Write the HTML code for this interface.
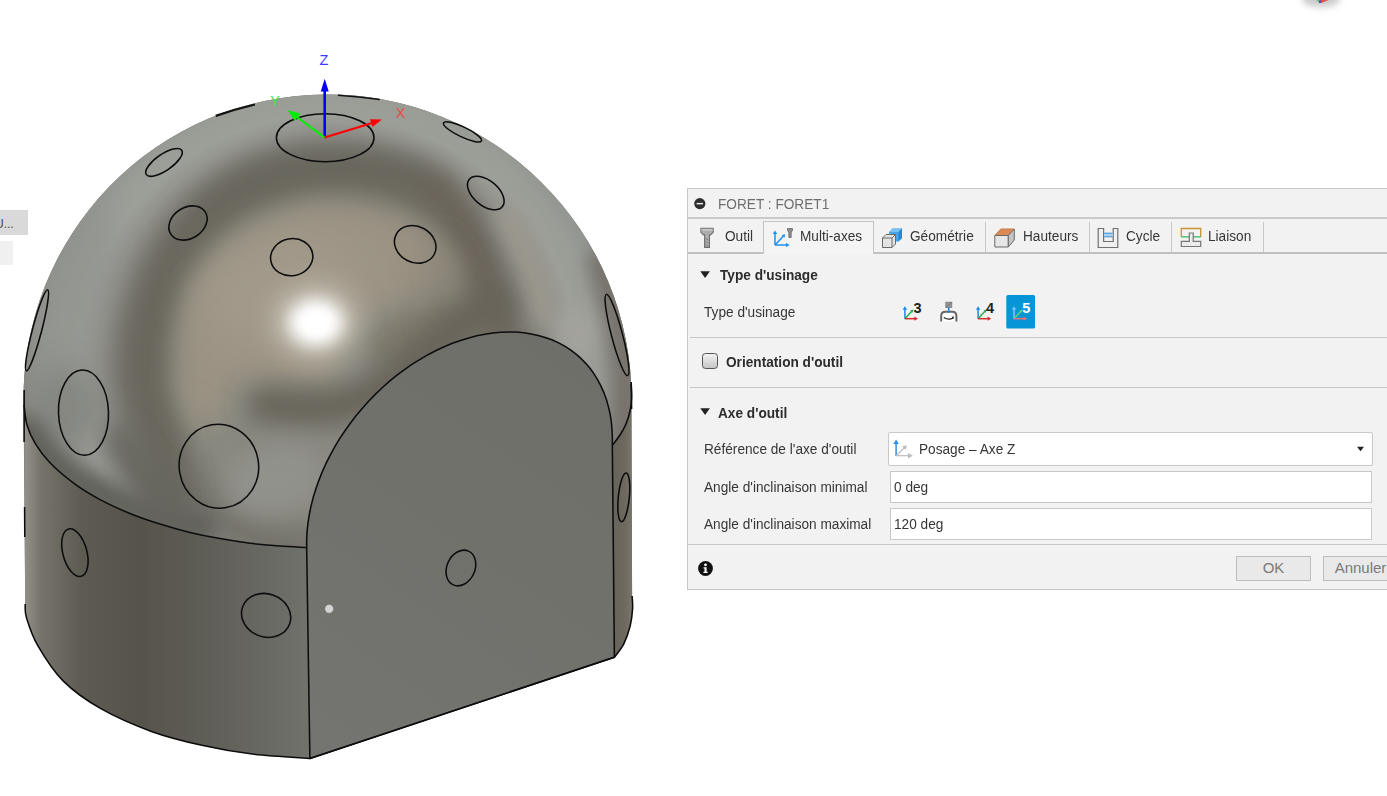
<!DOCTYPE html>
<html lang="fr"><head><meta charset="utf-8"><title>FORET : FORET1</title>
<style>
html,body{margin:0;padding:0;background:#fff;}
body{width:1387px;height:796px;overflow:hidden;position:relative;font-family:"Liberation Sans",sans-serif;font-size:13.65px;color:#363636;}
.abs{position:absolute;}
#dlg{position:absolute;left:687px;top:188px;width:720px;height:400px;background:#f2f2f2;border:1px solid #c6c6c6;}
#dlg *{box-sizing:border-box;}
.t{position:absolute;white-space:nowrap;line-height:16px;font-size:14px;transform:scaleX(0.975);transform-origin:0 50%;}
.b{font-weight:bold;color:#2c2c2c;}
.hl{position:absolute;background:#c8c8c8;height:1px;}
.vl{position:absolute;background:#c8c8c8;width:1px;}
.inp{position:absolute;background:#fff;border:1px solid #c8c8c8;}
.btn{position:absolute;background:#e9e9e9;border:1px solid #bdbdbd;color:#7a7a7a;font-size:15px;text-align:center;line-height:22px;}

</style></head>
<body>
<svg id="view" width="700" height="796" viewBox="0 0 700 796" style="position:absolute;left:0;top:0">
<defs>
<radialGradient id="gs" gradientUnits="userSpaceOnUse" cx="327.5" cy="365" r="320">
<stop offset="0" stop-color="#8a8a84"/>
<stop offset="0.45" stop-color="#88887f"/>
<stop offset="0.52" stop-color="#7d7c74"/>
<stop offset="0.58" stop-color="#75736b"/>
<stop offset="0.63" stop-color="#7c7b74"/>
<stop offset="0.68" stop-color="#878780"/>
<stop offset="0.73" stop-color="#94958f"/>
<stop offset="0.78" stop-color="#9d9f99"/>
<stop offset="0.84" stop-color="#9a9c96"/>
<stop offset="0.90" stop-color="#929490"/>
<stop offset="0.95" stop-color="#8b8b85"/>
<stop offset="1" stop-color="#86867f"/>
</radialGradient>
<radialGradient id="gh" gradientUnits="userSpaceOnUse" cx="318" cy="323" r="56">
<stop offset="0" stop-color="#fff" stop-opacity="1"/>
<stop offset="0.30" stop-color="#fff" stop-opacity="0.97"/>
<stop offset="0.55" stop-color="#f4f2ec" stop-opacity="0.6"/>
<stop offset="0.8" stop-color="#e0dcd0" stop-opacity="0.18"/>
<stop offset="1" stop-color="#d8d4c8" stop-opacity="0"/>
</radialGradient>
<linearGradient id="gc" gradientUnits="userSpaceOnUse" x1="24" y1="0" x2="310" y2="0">
<stop offset="0" stop-color="#94928a"/>
<stop offset="0.06" stop-color="#76736a"/>
<stop offset="0.2" stop-color="#5e5b53"/>
<stop offset="0.4" stop-color="#56534b"/>
<stop offset="0.65" stop-color="#5f5e57"/>
<stop offset="0.85" stop-color="#696963"/>
<stop offset="1" stop-color="#72726c"/>
</linearGradient>
<linearGradient id="gr" gradientUnits="userSpaceOnUse" x1="612" y1="0" x2="633" y2="0">
<stop offset="0" stop-color="#67635a"/>
<stop offset="0.6" stop-color="#6d695f"/>
<stop offset="1" stop-color="#7b776c"/>
</linearGradient>
<linearGradient id="gf" gradientUnits="userSpaceOnUse" x1="600" y1="340" x2="320" y2="750">
<stop offset="0" stop-color="#6f6f69"/>
<stop offset="1" stop-color="#747470"/>
</linearGradient>
<clipPath id="ch"><path d="M23.57 404.90 A304.0 304.0 0 1 1 631.50 398.60 C631.3 386.3 631.8 393.5 631.6 398.0 C631.4 402.5 630.9 406.7 630.0 411.0 C629.1 415.3 627.7 420.0 626.0 424.0 C624.3 428.0 622.3 431.5 620.0 435.0 C617.7 438.5 613.7 443.5 612.4 445.2 L612.4 437.2 L612.0 429.2 L611.3 421.5 L610.1 413.9 L608.4 406.6 L606.4 399.5 L603.9 392.6 L601.0 386.1 L597.7 379.9 L594.0 373.9 L590.0 368.3 L585.5 363.1 L580.7 358.2 L575.5 353.7 L570.1 349.6 L564.3 345.9 L558.2 342.6 L551.8 339.8 L545.1 337.4 L538.2 335.4 L531.1 333.9 L523.8 332.8 L516.3 332.1 L508.6 332.0 L500.8 332.2 L492.9 333.0 L484.9 334.2 L476.8 335.8 L468.7 337.9 L460.5 340.4 L452.3 343.3 L444.2 346.7 L436.1 350.5 L428.0 354.7 L420.1 359.3 L412.2 364.2 L404.5 369.6 L397.0 375.2 L389.6 381.2 L382.5 387.5 L375.5 394.1 L368.8 401.0 L362.4 408.2 L356.2 415.6 L350.3 423.2 L344.8 431.0 L339.5 438.9 L334.6 447.1 L330.1 455.3 L325.9 463.7 L322.1 472.1 L318.8 480.6 L315.8 489.1 L313.2 497.6 L311.0 506.1 L309.3 514.6 L308.0 523.0 L307.1 531.3 L306.7 539.5 L306.7 547.5 C302.5 547.3 289.5 546.9 280.0 546.1 C270.5 545.4 260.0 544.4 250.0 543.2 C240.0 541.9 230.0 540.4 220.0 538.6 C210.0 536.8 200.0 534.8 190.0 532.4 C180.0 530.0 170.0 527.3 160.0 524.1 C150.0 521.0 140.0 517.6 130.0 513.5 C120.0 509.4 109.2 504.4 100.0 499.6 C90.8 494.7 83.3 490.4 75.0 484.2 C66.7 478.1 56.7 469.7 50.0 462.8 C43.3 455.9 38.8 449.4 35.0 443.1 C31.2 436.7 28.8 431.3 27.0 425.0 C25.2 418.6 24.5 408.2 24.0 404.9 Z"/></clipPath>
<filter id="b20" filterUnits="userSpaceOnUse" x="-100" y="-100" width="900" height="1000"><feGaussianBlur stdDeviation="22"/></filter>
<filter id="b10" filterUnits="userSpaceOnUse" x="-100" y="-100" width="900" height="1000"><feGaussianBlur stdDeviation="9"/></filter>
<filter id="b14" filterUnits="userSpaceOnUse" x="-100" y="-100" width="900" height="1000"><feGaussianBlur stdDeviation="14"/></filter>
<filter id="b8" filterUnits="userSpaceOnUse" x="-100" y="-100" width="900" height="1000"><feGaussianBlur stdDeviation="8"/></filter>
<filter id="b5" filterUnits="userSpaceOnUse" x="-100" y="-100" width="900" height="1000"><feGaussianBlur stdDeviation="4"/></filter>
<filter id="b12" filterUnits="userSpaceOnUse" x="-100" y="-100" width="900" height="1000"><feGaussianBlur stdDeviation="12"/></filter>
<filter id="b16" filterUnits="userSpaceOnUse" x="-100" y="-100" width="900" height="1000"><feGaussianBlur stdDeviation="16"/></filter>
</defs>
<!-- left UI fragments -->
<rect x="0" y="210" width="28" height="25" fill="#d9d9d9"/>
<rect x="0" y="241" width="13" height="24" fill="#f0f0f0"/>
<text x="-5" y="228" font-family="Liberation Sans, sans-serif" font-size="12" fill="#444">U...</text>
<!-- body -->
<path d="M23.57 404.90 A304.0 304.0 0 1 1 631.50 398.60 L632.1 596.0 C632.2 598.1 632.9 603.6 632.6 608.6 C632.3 613.6 631.6 620.4 630.1 626.3 C628.6 632.2 626.4 638.7 623.8 643.9 C621.2 649.1 616.0 655.1 614.4 657.3 L309.9 758.4 C300.3 757.7 270.3 756.3 252.3 754.1 C234.3 751.9 218.7 749.1 201.9 745.3 C185.1 741.5 168.2 737.5 151.4 731.4 C134.6 725.3 115.6 717.1 100.9 708.7 C86.2 700.3 73.6 691.4 63.1 680.9 C52.6 670.4 43.9 656.1 37.8 645.6 C31.7 635.1 28.6 624.6 26.5 617.8 C24.4 611.0 25.4 607.1 25.2 605.0 Z" fill="#6e6b62"/>
<path d="M24.00 404.90 C24.5 408.2 25.2 418.6 27.0 425.0 C28.8 431.3 31.2 436.7 35.0 443.1 C38.8 449.4 43.3 455.9 50.0 462.8 C56.7 469.7 66.7 478.1 75.0 484.2 C83.3 490.4 90.8 494.7 100.0 499.6 C109.2 504.4 120.0 509.4 130.0 513.5 C140.0 517.6 150.0 521.0 160.0 524.1 C170.0 527.3 180.0 530.0 190.0 532.4 C200.0 534.8 210.0 536.8 220.0 538.6 C230.0 540.4 240.0 541.9 250.0 543.2 C260.0 544.4 270.5 545.4 280.0 546.1 C289.5 546.9 302.5 547.3 307.0 547.6 L309.9 758.4 C300.3 757.7 270.3 756.3 252.3 754.1 C234.3 751.9 218.7 749.1 201.9 745.3 C185.1 741.5 168.2 737.5 151.4 731.4 C134.6 725.3 115.6 717.1 100.9 708.7 C86.2 700.3 73.6 691.4 63.1 680.9 C52.6 670.4 43.9 656.1 37.8 645.6 C31.7 635.1 28.6 624.6 26.5 617.8 C24.4 611.0 25.4 607.1 25.2 605.0 Z" fill="url(#gc)"/>
<path d="M612.40 445.20 C613.7 443.5 617.7 438.5 620.0 435.0 C622.3 431.5 624.3 428.0 626.0 424.0 C627.7 420.0 629.1 415.3 630.0 411.0 C630.9 406.7 631.4 402.5 631.6 398.0 C631.8 393.5 631.3 386.3 631.2 384.0 L632.1 596.0 C632.2 598.1 632.9 603.6 632.6 608.6 C632.3 613.6 631.6 620.4 630.1 626.3 C628.6 632.2 626.4 638.7 623.8 643.9 C621.2 649.1 616.0 655.1 614.4 657.3 Z" fill="url(#gr)"/>
<g clip-path="url(#ch)">
<rect x="0" y="80" width="660" height="500" fill="url(#gs)"/>
<!-- overlays -->
<ellipse cx="78" cy="300" rx="30" ry="100" fill="#8f918b" opacity="0.55" filter="url(#b14)" transform="rotate(12 78 300)"/>
<g fill="none" stroke="#69665d" stroke-linecap="round" stroke-linejoin="round" filter="url(#b12)">
<path d="M168 500 C165 470 160 440 152 410 C143 380 143 345 153 315 C160 290 168 270 181 251 C195 228 215 200 261 180 C285 172 305 168 323 168 C345 167 360 168 372 170 C400 175 420 182 436 192" stroke-width="46"/>
<path d="M436 192 C455 208 468 235 476 262 C482 280 488 300 492 332" stroke-width="38" stroke="#6a645a"/>
</g>
<ellipse cx="425" cy="335" rx="62" ry="30" fill="#7f796d" filter="url(#b12)" transform="rotate(-18 425 335)"/>
<path d="M318 203 C350 201 378 205 403 216 C428 227 442 242 450 258 C456 268 460 276 462 282 C450 290 440 292 430 294 C418 297 410 299 400 302 C388 305 380 308 370 312 C360 317 354 321 350 327 C346 335 346 342 345 350 C343 360 341 367 338 373 C333 380 327 384 320 386 C312 386 306 385 300 384 C285 381 272 378 260 378 C250 378 242 379 235 382 C231 387 230 392 228 398 C226 407 223 415 218 421 C214 426 210 428 205 428 C200 428 195 425 192 420 C186 412 183 404 180 395 C178 384 180 372 180 360 C180 346 180 335 182 322 C184 308 187 297 192 286 C198 274 206 266 215 258 C225 248 236 239 248 232 C258 225 270 219 282 214 C293 209 305 205 318 203 Z" fill="#9b9383" filter="url(#b14)"/>
<ellipse cx="285" cy="292" rx="80" ry="56" fill="#a29a8a" filter="url(#b20)" transform="rotate(-8 295 295)"/>
<ellipse cx="448" cy="300" rx="18" ry="60" fill="#7d786d" opacity="0.5" filter="url(#b16)" transform="rotate(-15 445 300)"/>
<path d="M508 218 C525 250 538 285 546 318" stroke-width="24" fill="none" stroke="#9b988e" stroke-linecap="round" filter="url(#b10)"/>
<ellipse cx="578" cy="332" rx="22" ry="26" fill="#a3a29c" filter="url(#b10)"/>
<path d="M600 262 C612 295 620 330 624 365 C626 390 626 410 622 440" stroke-width="24" fill="none" stroke="#737068" stroke-linecap="round" filter="url(#b10)"/>
<path d="M266 405 C300 408 340 411 366 398 C390 385 415 360 445 336 C460 324 475 314 492 306" stroke-width="36" fill="none" stroke="#67635a" stroke-linecap="round" filter="url(#b12)"/>
<ellipse cx="66" cy="408" rx="36" ry="42" fill="#82847e" opacity="0.85" filter="url(#b14)"/>
<path d="M28 432 C40 452 55 468 75 480 C95 492 115 502 135 509 C155 516 175 522 200 528" stroke-width="34" fill="none" stroke="#62625c" stroke-linecap="round" filter="url(#b10)"/>
<path d="M120 440 C135 470 150 490 175 505" stroke-width="30" fill="none" stroke="#66665f" stroke-linecap="round" filter="url(#b12)"/>
<ellipse cx="275" cy="480" rx="50" ry="34" fill="#92928c" filter="url(#b12)" transform="rotate(-15 275 480)"/>
<ellipse cx="316" cy="322.500" rx="42" ry="36" fill="#e6e2d8" opacity="0.55" filter="url(#b14)"/>
<ellipse cx="316" cy="322.500" rx="27" ry="23" fill="#fff" filter="url(#b8)"/>
<ellipse cx="316" cy="322.500" rx="14" ry="12" fill="#fff" filter="url(#b5)"/>
</g>
<path d="M306.67 547.53 L306.7 539.5 L307.1 531.3 L308.0 523.0 L309.3 514.6 L311.0 506.1 L313.2 497.6 L315.8 489.1 L318.8 480.6 L322.1 472.1 L325.9 463.7 L330.1 455.3 L334.6 447.1 L339.5 438.9 L344.8 431.0 L350.3 423.2 L356.2 415.6 L362.4 408.2 L368.8 401.0 L375.5 394.1 L382.5 387.5 L389.6 381.2 L397.0 375.2 L404.5 369.6 L412.2 364.2 L420.1 359.3 L428.0 354.7 L436.1 350.5 L444.2 346.7 L452.3 343.3 L460.5 340.4 L468.7 337.9 L476.8 335.8 L484.9 334.2 L492.9 333.0 L500.8 332.2 L508.6 332.0 L516.3 332.1 L523.8 332.8 L531.1 333.9 L538.2 335.4 L545.1 337.4 L551.8 339.8 L558.2 342.6 L564.3 345.9 L570.1 349.6 L575.5 353.7 L580.7 358.2 L585.5 363.1 L590.0 368.3 L594.0 373.9 L597.7 379.9 L601.0 386.1 L603.9 392.6 L606.4 399.5 L608.4 406.6 L610.1 413.9 L611.3 421.5 L612.0 429.2 L612.4 437.2 L612.3 445.2 L614.4 657.3 L309.9 758.4 Z" fill="url(#gf)"/>
<g fill="none" stroke="#0c0c0c" stroke-width="1.55" stroke-linejoin="round">
<path d="M24.20 390.00 L24.1 442.0 M24.6 507 L24.8 537 M25.20 604.00 C25.4 607.1 24.4 611.0 26.5 617.8 C28.6 624.6 31.7 635.1 37.8 645.6 C43.9 656.1 52.6 670.4 63.1 680.9 C73.6 691.4 86.2 700.3 100.9 708.7 C115.6 717.1 134.6 725.3 151.4 731.4 C168.2 737.5 185.1 741.5 201.9 745.3 C218.7 749.1 234.3 751.9 252.3 754.1 C270.3 756.3 300.3 757.7 309.9 758.4 L614.4 657.3 C616.0 655.1 621.2 649.1 623.8 643.9 C626.4 638.7 628.6 632.2 630.1 626.3 C631.6 620.4 632.3 613.6 632.6 608.6 C632.9 603.6 632.2 598.1 632.1 596.0 M631.6 409 L631.5 398.6 L631.2 382.0"/>
<path d="M24.00 404.90 C24.5 408.2 25.2 418.6 27.0 425.0 C28.8 431.3 31.2 436.7 35.0 443.1 C38.8 449.4 43.3 455.9 50.0 462.8 C56.7 469.7 66.7 478.1 75.0 484.2 C83.3 490.4 90.8 494.7 100.0 499.6 C109.2 504.4 120.0 509.4 130.0 513.5 C140.0 517.6 150.0 521.0 160.0 524.1 C170.0 527.3 180.0 530.0 190.0 532.4 C200.0 534.8 210.0 536.8 220.0 538.6 C230.0 540.4 240.0 541.9 250.0 543.2 C260.0 544.4 270.5 545.4 280.0 546.1 C289.5 546.9 302.5 547.3 307.0 547.6"/>
<path d="M306.67 547.53 L306.7 539.5 L307.1 531.3 L308.0 523.0 L309.3 514.6 L311.0 506.1 L313.2 497.6 L315.8 489.1 L318.8 480.6 L322.1 472.1 L325.9 463.7 L330.1 455.3 L334.6 447.1 L339.5 438.9 L344.8 431.0 L350.3 423.2 L356.2 415.6 L362.4 408.2 L368.8 401.0 L375.5 394.1 L382.5 387.5 L389.6 381.2 L397.0 375.2 L404.5 369.6 L412.2 364.2 L420.1 359.3 L428.0 354.7 L436.1 350.5 L444.2 346.7 L452.3 343.3 L460.5 340.4 L468.7 337.9 L476.8 335.8 L484.9 334.2 L492.9 333.0 L500.8 332.2 L508.6 332.0 L516.3 332.1 L523.8 332.8 L531.1 333.9 L538.2 335.4 L545.1 337.4 L551.8 339.8 L558.2 342.6 L564.3 345.9 L570.1 349.6 L575.5 353.7 L580.7 358.2 L585.5 363.1 L590.0 368.3 L594.0 373.9 L597.7 379.9 L601.0 386.1 L603.9 392.6 L606.4 399.5 L608.4 406.6 L610.1 413.9 L611.3 421.5 L612.0 429.2 L612.4 437.2 L612.3 445.2 L614.4 657.3 L309.9 758.4 Z"/>
<path d="M631.20 384.00 C631.3 386.3 631.8 393.5 631.6 398.0 C631.4 402.5 630.9 406.7 630.0 411.0 C629.1 415.3 627.7 420.0 626.0 424.0 C624.3 428.0 622.3 431.5 620.0 435.0 C617.7 438.5 613.7 443.5 612.4 445.2"/>
<ellipse cx="325.2" cy="137.7" rx="48.8" ry="24.0" transform="rotate(0.0 325.2 137.7)"/>
<ellipse cx="164.0" cy="162.4" rx="21.5" ry="8.2" transform="rotate(-34.6 164.0 162.4)"/>
<ellipse cx="188.0" cy="223.0" rx="20.5" ry="15.5" transform="rotate(-33.0 188.0 223.0)"/>
<ellipse cx="291.7" cy="257.2" rx="21.2" ry="18.5" transform="rotate(-10.0 291.7 257.2)"/>
<ellipse cx="415.2" cy="244.4" rx="21.5" ry="18.0" transform="rotate(28.0 415.2 244.4)"/>
<ellipse cx="485.8" cy="193.0" rx="21.5" ry="12.5" transform="rotate(40.0 485.8 193.0)"/>
<ellipse cx="462.5" cy="131.9" rx="21.0" ry="5.0" transform="rotate(25.3 462.5 131.9)"/>
<ellipse cx="37.0" cy="330.3" rx="42.0" ry="4.6" transform="rotate(104.7 37.0 330.3)"/>
<ellipse cx="617.0" cy="335.0" rx="42.0" ry="5.5" transform="rotate(75.3 617.0 335.0)"/>
<ellipse cx="83.5" cy="412.6" rx="42.6" ry="25.0" transform="rotate(88.0 83.5 412.6)"/>
<ellipse cx="218.9" cy="466.2" rx="42.0" ry="39.7" transform="rotate(80.0 218.9 466.2)"/>
<ellipse cx="74.9" cy="552.6" rx="24.5" ry="12.0" transform="rotate(75.0 74.9 552.6)"/>
<ellipse cx="266.1" cy="615.4" rx="25.0" ry="21.5" transform="rotate(20.0 266.1 615.4)"/>
<ellipse cx="623.8" cy="497.3" rx="24.5" ry="5.5" transform="rotate(95.6 623.8 497.3)"/>
<ellipse cx="460.9" cy="568.0" rx="18.5" ry="14.0" transform="rotate(-65.6 460.9 568.0)"/>
</g>
<g stroke="#111" fill="none" stroke-linecap="butt">
<path d="M215.7 115.9 Q235 109.2 254.9 104.5" stroke-width="2.2"/>
<path d="M337.9 95.2 Q359 96.4 379.8 99.6" stroke-width="1.5"/>
</g>
<circle cx="329.2" cy="608.8" r="4.4" fill="#d4d4d4" stroke="#66665f" stroke-opacity="0.6" stroke-width="0.8"/>
<!-- axes -->
<g stroke-linecap="butt">
<line x1="324.7" y1="137.6" x2="324.7" y2="90" stroke="#0000ff" stroke-width="2.6"/>
<polygon points="324.7,78.7 320.7,91.5 328.7,91.5" fill="#0000ff"/>
<line x1="324.7" y1="137.6" x2="297" y2="117" stroke="#00ee00" stroke-width="2.1"/>
<polygon points="287.8,110.3 300.5,113.5 294.8,121" fill="#00ee00"/>
<line x1="324.7" y1="137.6" x2="371.3" y2="123.2" stroke="#ff0000" stroke-width="2.1"/>
<polygon points="381.9,119.5 370,119.2 372.4,127" fill="#ff0000"/>
</g>
<g font-family="Liberation Sans, sans-serif" font-size="14.5" text-anchor="middle">
<text x="324" y="64.5" fill="#3a3aff">Z</text>
<text x="275" y="106" fill="#44e844">Y</text>
<text x="400.5" y="118.2" fill="#f04848">X</text>
</g>
</svg>
<div id="dlg">
<!-- coordinates inside are page coords minus (688,189) -->
<div id="in" style="position:absolute;left:-688px;top:-189px;width:0;height:0">
<!-- title -->
<svg class="abs" style="left:693px;top:197px" width="13" height="13" viewBox="0 0 13 13"><circle cx="6.800" cy="6.600" r="5.600" fill="#2e2e2e"/><rect x="3.600" y="5.900" width="6.400" height="1.500" fill="#e8e8e8"/></svg>
<div class="t" style="left:718.4px;top:195.500px;color:#6e6e6e">FORET : FORET1</div>
<div class="hl" style="left:688px;top:217px;width:700px;height:2px;background:#cacaca"></div>
<!-- tabs -->
<div class="hl" style="left:688px;top:252px;width:76px;height:2px;background:#c0c0c0"></div>
<div class="hl" style="left:874px;top:252px;width:520px;height:2px;background:#c0c0c0"></div>
<div class="abs" style="left:763px;top:221px;width:111px;height:33px;border:1px solid #c4c4c4;border-bottom:none;background:#f4f4f4"></div>
<div class="vl" style="left:985px;top:222px;height:30px"></div>
<div class="vl" style="left:1089px;top:222px;height:30px"></div>
<div class="vl" style="left:1171px;top:222px;height:30px"></div>
<div class="vl" style="left:1263px;top:222px;height:30px"></div>
<div class="t" style="left:725px;top:228.3px">Outil</div>
<div class="t" style="left:799.8px;top:228.3px">Multi-axes</div>
<div class="t" style="left:910px;top:228.3px">Géométrie</div>
<div class="t" style="left:1022.5px;top:228.3px">Hauteurs</div>
<div class="t" style="left:1125.8px;top:228.3px">Cycle</div>
<div class="t" style="left:1208.4px;top:228.3px">Liaison</div>
<!-- tab icons -->
<svg class="abs" style="left:698px;top:226px" width="18" height="24" viewBox="0 0 18 24"><path d="M2.900 2.300h12.300v4l-2.600 2.600h-1.100v12.500h-4.900v-12.500h-1.100l-2.600-2.600z" fill="#ababab" stroke="#707070" stroke-width="1.100" stroke-linejoin="round"/><path d="M3.500 2.900h11v2h-11z" fill="#c4c4c4"/><path d="M7.300 12.500l3.400 1.700M7.300 15.500l3.400 1.700M7.300 18.500l3.400 1.700" stroke="#7a7a7a" stroke-width="0.800"/></svg>
<svg class="abs" style="left:770px;top:225px" width="26" height="24" viewBox="0 0 26 24"><g stroke="#1e90ee" stroke-width="1.5" fill="#1e90ee"><path d="M5 20V8" fill="none"/><path d="M5 20H17" fill="none"/><path d="M5 20L13.5 11" fill="none"/><path d="M5 5.5l2.3 3.5h-4.6z" stroke="none"/><path d="M19.5 20l-3.5 -2.3v4.6z" stroke="none"/><path d="M15.2 9.2l-0.6 3.6l-3 -2.8z" stroke="none"/></g><path d="M17.5 3.5h5v2.2l-1.3 1.3v5.5h-2.4v-5.5l-1.3-1.3z" fill="#8a8a8a" stroke="#6a6a6a" stroke-width="0.8"/></svg>
<svg class="abs" style="left:881px;top:227px" width="23" height="22" viewBox="0 0 23 22"><path d="M8 5l3.5-3.5h9.5v9.5l-3.5 3.5h-9.5z" fill="#4aa3e6"/><path d="M8 5l3.5-3.5h9.5l-3.5 3.5z" fill="#7cc0f2"/><path d="M17.5 5l3.5-3.5v9.5l-3.5 3.5z" fill="#2f86cc"/><path d="M1.5 11l3.5-3.5h9.5v9.5l-3.5 3.5h-9.5z" fill="#e4e4e4" stroke="#6a6a6a" stroke-width="1"/><path d="M1.5 11h9.5v9.5M11 11l3.5-3.5" fill="none" stroke="#6a6a6a" stroke-width="1"/></svg>
<svg class="abs" style="left:993px;top:227px" width="23" height="22" viewBox="0 0 23 22"><path d="M1.8 8.5l6-6.5h13.5l-6 6.5z" fill="#d98a55"/><path d="M1.8 8.5h13.5v11.5h-13.5z" fill="#e6e6e6" stroke="#6a6a6a" stroke-width="1"/><path d="M15.3 8.5l6-6.5v11l-6 7z" fill="#c4c4c4" stroke="#6a6a6a" stroke-width="1"/><path d="M1.8 8.5l6-6.5h13.5" fill="none" stroke="#c77a48" stroke-width="1"/></svg>
<svg class="abs" style="left:1096px;top:226px" width="24" height="24" viewBox="0 0 24 24"><path d="M2.200 2.500v19h19.600v-19h-4.600v13h-9.600v-13z" fill="#f0f0f0" stroke="#707070" stroke-width="1.200"/><rect x="8.200" y="7" width="8.400" height="4" fill="#a9d3f3"/><path d="M8.200 7.200h8.400M8.200 10.800h8.400" stroke="#3d8fd6" stroke-width="1"/></svg>
<svg class="abs" style="left:1180px;top:226px" width="22" height="22" viewBox="0 0 22 22"><path d="M1.300 10.900V2.500H20.700V10.900" fill="none" stroke="#c8962a" stroke-width="1.300"/><path d="M1.300 10.900H9.300M13.200 10.900H20.700" fill="none" stroke="#2eb85c" stroke-width="1.400"/><path d="M9.300 15.400V7H13.200V15.400H20.700V20.500H1.300V15.400Z" fill="#ececec" stroke="#777" stroke-width="1.200"/></svg>

<!-- section 1 -->
<svg class="abs" style="left:700px;top:270px" width="11" height="9" viewBox="0 0 11 9"><path d="M0.300 1.300h9.600l-4.800 6.800z" fill="#222"/></svg>
<div class="t b" style="left:719.600px;top:266.600px">Type d'usinage</div>
<div class="t" style="left:703.500px;top:304px">Type d'usinage</div>
<!-- machining icons -->
<svg class="abs" style="left:900px;top:296px;overflow:visible" width="140" height="34" viewBox="0 0 140 34">
<rect x="106.300" y="-1" width="28.700" height="33.400" rx="1.500" fill="#0696d7"/>
<g stroke-width="1.500" fill="none">
<path d="M4.900 22.700V13" stroke="#1e88e5"/><path d="M4.900 22.700L12 15" stroke="#22b14c"/><path d="M4.900 22.700H15.500" stroke="#d32f2f"/>
<path d="M78.100 22.700V13" stroke="#1e88e5"/><path d="M78.100 22.700L85.200 15" stroke="#22b14c"/><path d="M78.100 22.700H88.700" stroke="#d32f2f"/>
<path d="M114 22.700V13" stroke="#7cc4ff"/><path d="M114 22.700L121.100 15" stroke="#5fd17e"/><path d="M114 22.700H124.600" stroke="#e57373"/>
</g>
<path d="M4.900 10.200l2.200 3.600h-4.400z" fill="#1e88e5"/><path d="M18 22.700l-3.600 2.100v-4.200z" fill="#d32f2f"/><path d="M13.300 13.600l-0.700 3.100l-2.300-2.200z" fill="#22b14c"/>
<path d="M78.100 10.200l2.200 3.600h-4.400z" fill="#1e88e5"/><path d="M91.200 22.700l-3.600 2.100v-4.200z" fill="#d32f2f"/><path d="M86.500 13.600l-0.700 3.100l-2.300-2.200z" fill="#22b14c"/>
<path d="M114 10.200l2.200 3.600h-4.400z" fill="#7cc4ff"/><path d="M127.100 22.700l-3.600 2.100v-4.200z" fill="#e57373"/><path d="M122.400 13.600l-0.700 3.100l-2.300-2.200z" fill="#5fd17e"/>
<g font-family="Liberation Sans, sans-serif" font-weight="bold" font-size="14.500">
<text x="13.500" y="16.800" fill="#222">3</text><text x="86.100" y="16.800" fill="#222">4</text><text x="122.300" y="16.800" fill="#fff">5</text></g>
<!-- turning icon -->
<rect x="45.800" y="6.200" width="6" height="5.200" fill="#999" stroke="#777" stroke-width="0.800"/>
<path d="M46.300 11l5-4.300" stroke="#666" stroke-width="0.800"/>
<path d="M41.200 25.600V20q0-4.300 4.300-4.300h6.600q4.300 0 4.300 4.300V25.600" fill="#fff" stroke="#666" stroke-width="2"/>
<path d="M48.700 11.400v5.500" stroke="#1e88e5" stroke-width="1.600"/>
<path d="M43.800 21.600q5 3 9.400 0.400" fill="none" stroke="#222" stroke-width="1.200"/><path d="M54.200 20.600l-2.600 0.200l1.500 2.100z" fill="#222"/>
</svg>
<div class="hl" style="left:690px;top:337px;width:700px"></div>
<!-- section 2 -->
<div class="abs" style="left:701.700px;top:353px;width:16.300px;height:16px;border:1.200px solid #555;border-radius:3.500px;background:linear-gradient(#f2f2f2,#c6c6c6)"></div>
<div class="t b" style="left:726.200px;top:354.400px">Orientation d'outil</div>
<div class="hl" style="left:690px;top:387px;width:700px"></div>
<!-- section 3 -->
<svg class="abs" style="left:700px;top:407px" width="11" height="9" viewBox="0 0 11 9"><path d="M0.300 1.300h9.600l-4.800 6.800z" fill="#222"/></svg>
<div class="t b" style="left:718.400px;top:404.900px">Axe d'outil</div>
<div class="t" style="left:703.500px;top:441.200px">Référence de l'axe d'outil</div>
<div class="inp" style="left:888px;top:432px;width:485px;height:34px;border-radius:2px"></div>
<svg class="abs" style="left:892px;top:437px" width="24" height="24" viewBox="0 0 24 24"><path d="M4.100 19V6" stroke="#2a8fe6" stroke-width="1.500"/><path d="M4.100 2.600l2.800 4.400h-5.600z" fill="#2a8fe6"/><path d="M4.100 18.700H17" stroke="#bcbcbc" stroke-width="1.200"/><path d="M20.800 18.700l-4.800 2.700v-5.400z" fill="#bcbcbc"/><path d="M4.100 18.700L12 11" stroke="#bcbcbc" stroke-width="1.200"/><path d="M14.900 8.200l-1.300 4.900l-3.500-3.500z" fill="#bcbcbc"/></svg>
<div class="t" style="left:918.700px;top:441.300px">Posage – Axe Z</div>
<svg class="abs" style="left:1356px;top:446px" width="9" height="6" viewBox="0 0 9 6"><path d="M1 0.800h7l-3.500 4.400z" fill="#222"/></svg>
<div class="t" style="left:703.500px;top:479.300px">Angle d'inclinaison minimal</div>
<div class="inp" style="left:890px;top:471px;width:482px;height:32px"></div>
<div class="t" style="left:893.700px;top:479.300px">0 deg</div>
<div class="t" style="left:703.500px;top:515.900px">Angle d'inclinaison maximal</div>
<div class="inp" style="left:890px;top:508px;width:482px;height:32px"></div>
<div class="t" style="left:894.200px;top:515.900px">120 deg</div>
<div class="hl" style="left:688px;top:544px;width:700px"></div>
<!-- footer -->
<svg class="abs" style="left:697px;top:560px" width="17" height="17" viewBox="0 0 17 17"><circle cx="8.500" cy="8.500" r="7.400" fill="#111"/><circle cx="8.500" cy="4.800" r="1.400" fill="#fff"/><path d="M6.600 7.300h3v4.500h1.100v1.300h-4.300v-1.300h1.100v-3.200h-0.900z" fill="#fff"/></svg>
<div class="btn" style="left:1236px;top:556px;width:75px;height:25px">OK</div>
<div class="btn" style="left:1323px;top:556px;width:75px;height:25px">Annuler</div>
</div>
</div>
<!-- viewcube fragment -->
<svg class="abs" style="left:1280px;top:0" width="107" height="30" viewBox="0 0 107 30">
<defs><filter id="vb" filterUnits="userSpaceOnUse" x="-20" y="-20" width="150" height="70"><feGaussianBlur stdDeviation="3.500"/></filter></defs>
<ellipse cx="41" cy="-1" rx="19" ry="8" fill="#777" opacity="0.400" filter="url(#vb)"/>
<path d="M37 0l3 3l1.500 0l7-3z" fill="#e05050"/><path d="M37 0l2.500 3l1.500 0l-0.500-3z" fill="#4040d0"/><path d="M36.500 0l2.500 2.600l0.500-2.600z" fill="#60d060"/>
</svg>

</body></html>
